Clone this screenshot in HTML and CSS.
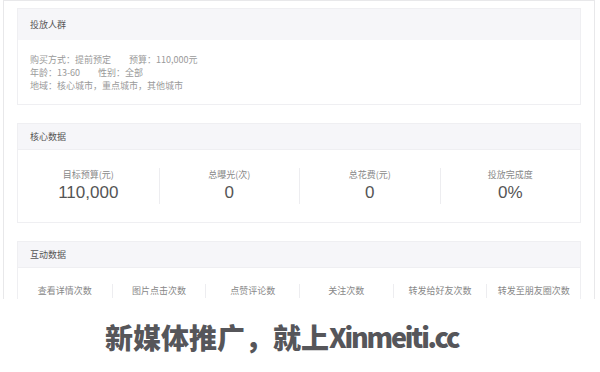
FILE: index.html
```html
<!DOCTYPE html>
<html lang="zh-CN">
<head>
    <meta charset="utf-8">
    <title>投放数据</title>
    <link rel="stylesheet" href="styles.css">
</head>
<body>
    <div class="screen">
        <div class="card">
            <div class="card-head tall">投放人群</div>
            <div class="info">
                <div>购买方式：提前预定<span class="sp"></span>预算：110,000元</div>
                <div>年龄：13-60<span class="sp"></span>性别：全部</div>
                <div>地域：核心城市，重点城市，其他城市</div>
            </div>
        </div>

        <div class="card">
            <div class="card-head">核心数据</div>
            <div class="stats">
                <div class="stat"><div class="label">目标预算(元)</div><div class="value">110,000</div></div>
                <div class="stat"><div class="label">总曝光(次)</div><div class="value">0</div></div>
                <div class="stat"><div class="label">总花费(元)</div><div class="value">0</div></div>
                <div class="stat"><div class="label">投放完成度</div><div class="value">0%</div></div>
            </div>
        </div>

        <div class="card">
            <div class="card-head">互动数据</div>
            <div class="stats six">
                <div class="stat"><div class="label">查看详情次数</div></div>
                <div class="stat"><div class="label">图片点击次数</div></div>
                <div class="stat"><div class="label">点赞评论数</div></div>
                <div class="stat"><div class="label">关注次数</div></div>
                <div class="stat"><div class="label">转发给好友次数</div></div>
                <div class="stat"><div class="label">转发至朋友圈次数</div></div>
            </div>
        </div>
    </div>
    <div class="banner">新媒体推广，就上<span class="site">Xinmeiti.cc</span></div>
</body>
</html>
```

FILE: styles.css
```css
body { margin: 0; background: #fff; font-family: "Noto Sans CJK SC", "Liberation Sans", sans-serif; width: 600px; }
.screen { height: 299px; overflow: hidden; margin-left: 3px; width: 592px; border: 1px solid #e8e8ea; border-bottom: none; padding: 7px 13px 0 13px; box-sizing: border-box; }
.card { border: 1px solid #efeff2; margin-bottom: 18px; background: #fff; }
.card-head { height: 25px; line-height: 25px; background: #f6f6f9; padding-left: 12px; font-size: 9px; color: #555; border-bottom: 1px solid #efeff2; }
.card-head.tall { height: 31px; line-height: 31px; border-bottom: none; }
.info { padding: 13px 12px 12px; font-size: 9px; line-height: 13px; color: #9a9a9a; }
.sp { display: inline-block; width: 18px; }
.stats { display: grid; grid-template-columns: repeat(4, 1fr); padding: 18px 0 18px; }
.stats.six { grid-template-columns: repeat(6, 1fr); padding-top: 16px; }
.stat { text-align: center; border-left: 1px solid #ededf0; }
.stat:first-child { border-left: none; }
.label { font-size: 9px; line-height: 14px; color: #888; }
.value { font-family: "Liberation Sans", sans-serif; font-size: 17px; line-height: 22px; color: #555; }
.banner { height: 73px; display: flex; align-items: center; padding-left: 105px; font-size: 28px; font-weight: 900; color: #56565a; padding-top: 2px; box-sizing: border-box; }
.site { letter-spacing: -2.2px; font-size: 27px; }
```
